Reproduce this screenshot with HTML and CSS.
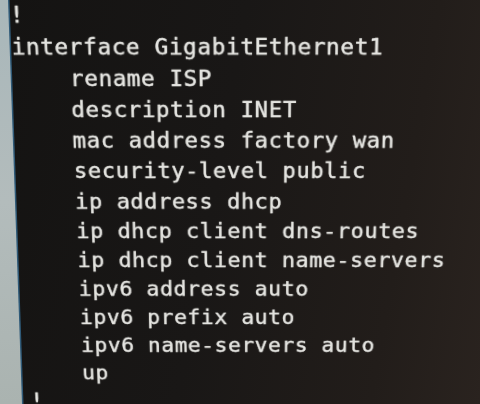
FILE: index.html
```html
<!DOCTYPE html>
<html lang="en">
<head>
<meta charset="utf-8">
<title>Router config</title>
<link rel="stylesheet" href="styles.css">
</head>
<body>
<main class="screen">
<pre class="terminal">!
interface GigabitEthernet1
    rename ISP
    description INET
    mac address factory wan
    security-level public
    ip address dhcp
    ip dhcp client dns-routes
    ip dhcp client name-servers
    ipv6 address auto
    ipv6 prefix auto
    ipv6 name-servers auto
    up
!</pre>
</main>
</body>
</html>
```
FILE: styles.css
```css
html, body {
  margin: 0;
  padding: 0;
  width: 480px;
  height: 404px;
  overflow: hidden;
}

body {
  position: relative;
  background: linear-gradient(100deg, #141312 0%, #191716 45%, #221d1a 80%, #2a231f 100%);
}

body::before {
  content: "";
  position: absolute;
  left: 0;
  top: 0;
  width: 26px;
  height: 404px;
  background: #2f5a78;
  clip-path: polygon(0 0, 9.5px 0, 23.5px 100%, 0 100%);
}

body::after {
  content: "";
  position: absolute;
  left: 0;
  top: 0;
  width: 26px;
  height: 404px;
  background: linear-gradient(180deg, #a9b7ba 0%, #b3bcbc 50%, #aab3b0 100%);
  clip-path: polygon(0 0, 8px 0, 22px 100%, 0 100%);
}

.screen {
  height: 404px;
}

.terminal {
  margin: -1px 0 0 0;
  padding: 0 0 0 9px;
  font-family: "DejaVu Sans Mono", "Liberation Mono", monospace;
  font-size: 23px;
  letter-spacing: 0.6px;
  line-height: 33.1px;
  color: #e4e4e0;
  -webkit-text-stroke: 0.35px #e4e4e0;
  text-shadow: 0 0 1.5px rgba(255, 255, 255, 0.35);
  transform-origin: 256px 0;
  transform: perspective(800px) rotateX(-9.9deg);
}
```
